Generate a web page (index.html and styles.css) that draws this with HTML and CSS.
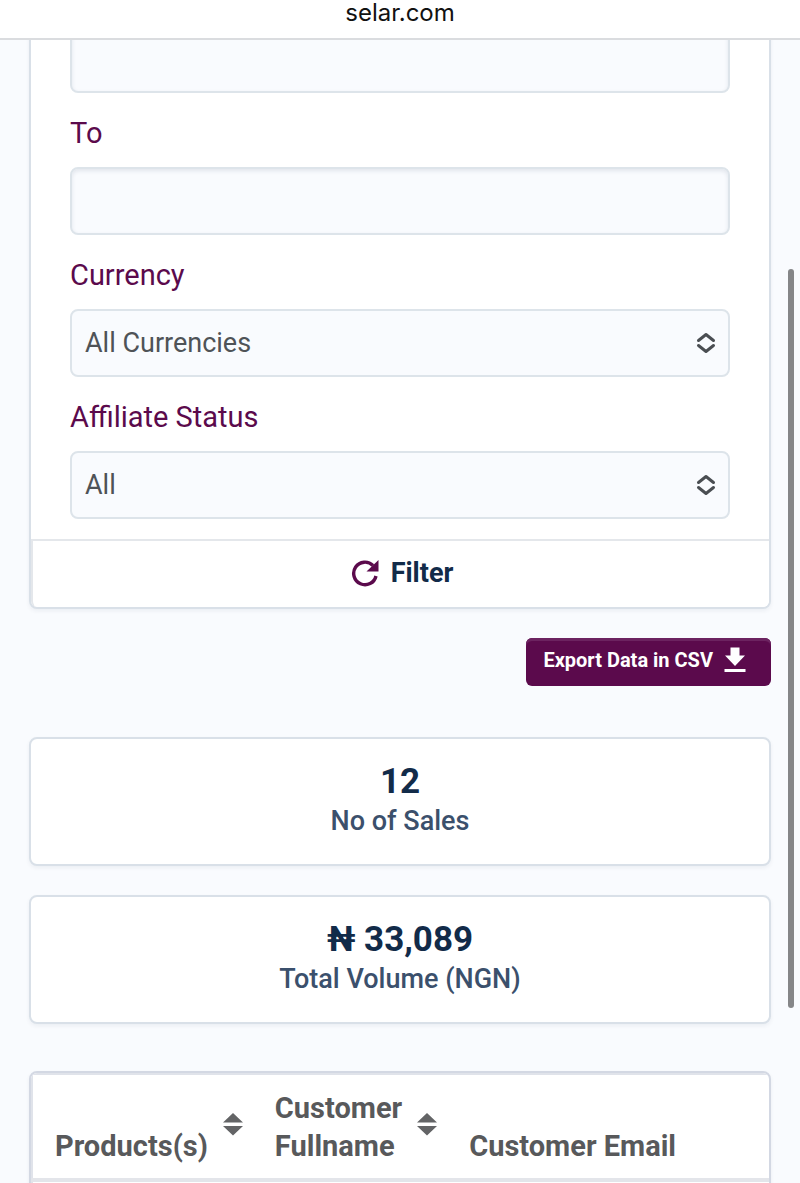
FILE: index.html
```html
<!DOCTYPE html>
<html lang="en">
<head>
  <meta charset="UTF-8" />
  <meta name="viewport" content="width=device-width, initial-scale=1.0" />
  <title>Sales</title>
  <link rel="stylesheet" href="styles.css">
</head>
<body>
  <header class="address-bar">selar.com</header>

  <main class="page">
    <form class="card filter">
      <div class="filter-fields">
        <input class="control" type="text" aria-label="Start date" />

        <label for="to">To</label>
        <input class="control" id="to" type="text" />

        <label for="currency">Currency</label>
        <div class="select">
          <select class="control" id="currency">
            <option>All Currencies</option>
          </select>
          <svg viewBox="0 0 20 22" width="20" height="22"><path d="M2.500 8.500L10 2.500L17.500 8.500M2.500 13.500L10 19.500L17.500 13.500" /></svg>
        </div>

        <label for="status">Affiliate Status</label>
        <div class="select">
          <select class="control" id="status">
            <option>All</option>
          </select>
          <svg viewBox="0 0 20 22" width="20" height="22"><path d="M2.500 8.500L10 2.500L17.500 8.500M2.500 13.500L10 19.500L17.500 13.500" /></svg>
        </div>
      </div>
      <button class="filter-button" type="button">
        <svg viewBox="0 0 28 28" width="28" height="28">
          <path d="M25 17A11.300 11.300 0 1 1 22 6.500" fill="none" stroke="#5b0a4c" stroke-width="3.400" />
          <path d="M27.500 1V12.500H15.500z" fill="#5b0a4c" />
        </svg>
        Filter
      </button>
    </form>

    <div class="actions">
      <button class="export" type="button">
        Export Data in CSV
        <svg viewBox="0 0 22 26" width="22" height="26"><path d="M6.500 0.500H15.500V8.500H21L11 19L1 8.500H6.500zM0.500 22H21.500V25H0.500z" /></svg>
      </button>
    </div>

    <section class="card stat">
      <h2>12</h2>
      <p>No of Sales</p>
    </section>

    <section class="card stat">
      <h2>₦ 33,089</h2>
      <p>Total Volume (NGN)</p>
    </section>

    <div class="card table-card">
      <table>
        <thead>
          <tr>
            <th class="sortable">
              <div>Products(s)
                <svg viewBox="0 0 20 24" width="20" height="24"><path d="M10 1L20 10.500H0zM0 14H20L10 23.500z" /></svg>
              </div>
            </th>
            <th class="sortable">
              <div><span>Customer<br>Fullname</span>
                <svg viewBox="0 0 20 24" width="20" height="24"><path d="M10 1L20 10.500H0zM0 14H20L10 23.500z" /></svg>
              </div>
            </th>
            <th>Customer Email</th>
          </tr>
        </thead>
        <tbody>
          <tr><td colspan="3"></td></tr>
        </tbody>
      </table>
    </div>
  </main>

  <div class="scroll-thumb"></div>
</body>
</html>
```
FILE: styles.css
```css
* {
  box-sizing: border-box;
}
body {
  margin: 0;
  height: 100vh;
  display: flex;
  flex-direction: column;
  overflow: hidden;
  background: #f9fbfe;
  font-family: Roboto, sans-serif;
  color: #122b49;
}
button, input, select {
  font-family: inherit;
}
.address-bar {
  flex: none;
  height: 40px;
  line-height: 26px;
  border-bottom: 2px solid #dadcdf;
  background: #fff;
  color: #111;
  font-family: Inter, sans-serif;
  font-size: 24px;
  text-align: center;
}
.page {
  flex: 1;
  min-height: 0;
  padding: 0 29px;
  overflow: hidden;
}
.card {
  border: 2px solid #d9e0e8;
  border-radius: 8px;
  background: #fff;
  box-shadow: 0 2px 4px rgba(18, 41, 74, 0.06);
}

/* filter form, scrolled part way under the address bar */
.filter {
  margin-top: -56px;
}
.filter-fields {
  padding: 39px 39px 20px;
}
.filter label {
  display: block;
  padding: 18px 0 12px;
  font-size: 29px;
  line-height: 44px;
  color: #5b0a4c;
}
.control {
  display: block;
  width: 100%;
  height: 68px;
  padding: 0 13px;
  border: 2px solid #dde4ea;
  border-radius: 8px;
  background: #f9fbfe;
  font-size: 27px;
  color: #4f5357;
}
input.control {
  box-shadow: inset 0 2px 4px rgba(18, 41, 74, 0.1);
}
.select {
  position: relative;
}
.select select {
  appearance: none;
}
.select svg {
  position: absolute;
  top: 23px;
  right: 14px;
  fill: none;
  stroke: #4a4e52;
  stroke-width: 3;
  stroke-linecap: round;
  stroke-linejoin: round;
  pointer-events: none;
}
.filter-button {
  display: flex;
  align-items: center;
  justify-content: center;
  gap: 12px;
  width: 100%;
  height: 68px;
  padding: 0 0 2px 2px;
  border: 0;
  border-top: 2px solid #e4e7eb;
  border-left: 2px solid #e4e7eb;
  border-radius: 0 0 6px 6px;
  background: #fff;
  font-size: 27px;
  font-weight: 700;
  color: #122b49;
}

.actions {
  display: flex;
  justify-content: flex-end;
  margin: 29px 0 51px;
}
.export {
  display: flex;
  align-items: center;
  gap: 11px;
  height: 48px;
  padding: 0 25px 4px 17px;
  border: 0;
  border-radius: 6px;
  background: #5b0a4c;
  box-shadow: inset 0 3px 0 #6c2360;
  font-size: 20px;
  font-weight: 700;
  color: #fff;
}
.export svg {
  fill: #fff;
}

.stat {
  margin-bottom: 29px;
  padding: 23px 0;
  text-align: center;
}
.stat h2 {
  margin: 0;
  font-size: 35px;
  line-height: 40px;
  font-weight: 700;
}
.stat p {
  margin: 0;
  font-size: 27px;
  line-height: 39px;
  font-weight: 500;
  color: #3b506c;
}

.table-card {
  margin-top: 47px;
  border-color: #d3d8e3;
  overflow: hidden;
}
table {
  width: 100%;
  border-collapse: collapse;
  border-top: 2px solid #e0e3ea;
  border-left: 2px solid #e0e3ea;
}
th {
  padding: 14px 0 13px 22px;
  border-bottom: 4px solid #e3e5ea;
  font-size: 29px;
  line-height: 38px;
  font-weight: 700;
  color: #58595b;
  text-align: left;
  vertical-align: bottom;
  white-space: nowrap;
}
th:last-child {
  width: 100%;
}
.sortable div {
  display: flex;
  align-items: flex-end;
  gap: 15px;
  padding-right: 10px;
}
.sortable svg {
  margin-bottom: 29px;
  fill: #636466;
}
td {
  height: 60px;
}

.scroll-thumb {
  position: fixed;
  top: 269px;
  right: 6px;
  width: 6px;
  height: 739px;
  border-radius: 3px;
  background: #858688;
}
```
